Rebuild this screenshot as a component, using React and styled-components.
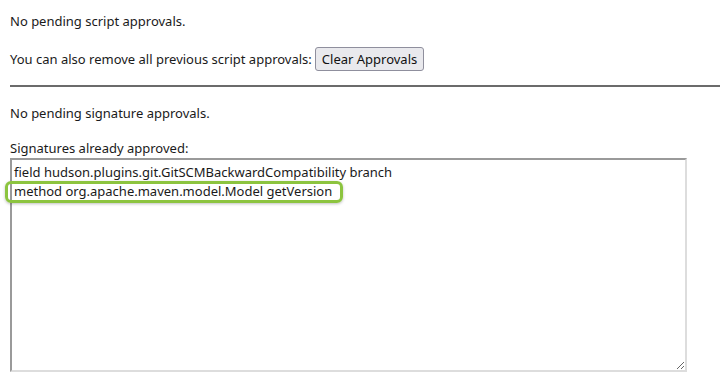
import React from 'react';
import styled, { createGlobalStyle } from 'styled-components';

const GlobalStyle = createGlobalStyle`
  html, body {
    margin: 0;
    padding: 0;
    background: #ffffff;
  }
  body {
    font-family: 'Noto Sans', 'Open Sans', sans-serif;
    font-size: 13px;
    color: #1a1a1a;
  }
`;

const Page = styled.div`
  position: relative;
  padding: 12px 0 0 10px;
  height: 388px;
  box-sizing: border-box;
  overflow: hidden;
`;

const Text = styled.p`
  margin: ${({ top }) => top || 0}px 0 0;
  line-height: 18px;
`;

const Row = styled.div`
  display: flex;
  align-items: center;
  gap: 3px;
  margin-top: 17px;
  height: 24px;
`;

const Button = styled.button`
  font-family: inherit;
  font-size: 13px;
  color: #111;
  height: 24px;
  padding: 0 6px;
  background: #e9e9ed;
  border: 1px solid #8f8f9d;
  border-radius: 3px;
`;

const Rule = styled.hr`
  margin: 14px 0 0;
  border: none;
  height: 2px;
  background: #6b6b6b;
`;

const Signatures = styled.textarea`
  display: block;
  margin-top: 1px;
  width: 677px;
  height: 214px;
  box-sizing: border-box;
  padding: 3px 2px;
  font-family: inherit;
  font-size: 13px;
  line-height: 19px;
  color: #1a1a1a;
  border-style: solid;
  border-width: 2px;
  border-color: #9a9a9a #dddddd #dddddd #9a9a9a;
  background: #fff;
  outline: none;
`;

const Highlight = styled.div`
  position: absolute;
  left: 5px;
  top: 181px;
  width: 338px;
  height: 22px;
  box-sizing: border-box;
  border: 3px solid #8cc43f;
  border-radius: 6px;
  box-shadow: 0 1px 3px rgba(0, 0, 0, 0.25);
  pointer-events: none;
`;

const signatures = [
  'field hudson.plugins.git.GitSCMBackwardCompatibility branch',
  'method org.apache.maven.model.Model getVersion',
].join('\n');

const App = () => (
  <>
    <GlobalStyle />
    <Page>
      <Text>No pending script approvals.</Text>
      <Row>
        <span>You can also remove all previous script approvals:</span>
        <Button>Clear Approvals</Button>
      </Row>
      <Rule />
      <Text top={17}>No pending signature approvals.</Text>
      <Text top={17}>Signatures already approved:</Text>
      <Signatures readOnly value={signatures} />
      <Highlight />
    </Page>
  </>
);

export default App;
